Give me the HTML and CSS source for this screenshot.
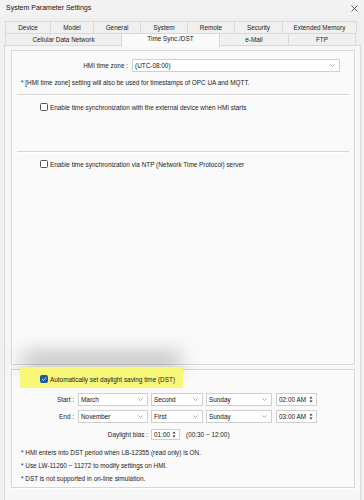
FILE: index.html
```html
<!DOCTYPE html>
<html>
<head>
    <title>System Parameter Settings</title>
    <link rel="stylesheet" href="styles.css">
</head>
<body>
    <div class="titlebar">
        <span class="title">System Parameter Settings</span>
        <svg class="close" width="7" height="7" viewBox="0 0 7 7"><path d="M0.5 0.5 L6.5 6.5 M6.5 0.5 L0.5 6.5" stroke="#333" stroke-width="0.8" fill="none"/></svg>
    </div>
    <div class="tabs">
        <div class="tabrow">
            <div class="tab w45">Device</div>
            <div class="tab w43">Model</div>
            <div class="tab w47">General</div>
            <div class="tab w47">System</div>
            <div class="tab w47">Remote</div>
            <div class="tab w48">Security</div>
            <div class="tab w75 last">Extended Memory</div>
        </div>
        <div class="tabrow">
            <div class="tab w116">Cellular Data Network</div>
            <div class="tab w99 active">Time Sync./DST</div>
            <div class="tab w69">e-Mail</div>
            <div class="tab w68 last">FTP</div>
        </div>
    </div>
    <div class="panel">
        <div class="group group-sync">
            <div class="row tz-row">
                <span class="label tz-label">HMI time zone :</span>
                <div class="select tz-select"><span>(UTC-08:00)</span><svg class="chev" width="5" height="3" viewBox="0 0 5 3"><path d="M0.3 0.3 L2.5 2.5 L4.7 0.3" stroke="#777" stroke-width="0.6" fill="none"/></svg></div>
            </div>
            <p class="note tz-note">* [HMI time zone] setting will also be used for timestamps of OPC UA and MQTT.</p>
            <div class="sep"></div>
            <label class="check"><span class="box"></span>Enable time synchronization with the external device when HMI starts</label>
            <div class="sep sep2"></div>
            <label class="check"><span class="box"></span>Enable time synchronization via NTP (Network Time Protocol) server</label>
        </div>
        <div class="group group-dst">
            <div class="highlight">
                <label class="check"><span class="box checked"><svg width="6" height="6" viewBox="0 0 6 6"><path d="M1 3.2 L2.4 4.5 L5 1.5" stroke="#fff" stroke-width="0.8" fill="none"/></svg></span>Automatically set daylight saving time (DST)</label>
            </div>
            <div class="row dst-row">
                <span class="label dst-label">Start :</span>
                <div class="select s-month"><span>March</span><svg class="chev" width="5" height="3" viewBox="0 0 5 3"><path d="M0.3 0.3 L2.5 2.5 L4.7 0.3" stroke="#777" stroke-width="0.6" fill="none"/></svg></div>
                <div class="select s-week"><span>Second</span><svg class="chev" width="5" height="3" viewBox="0 0 5 3"><path d="M0.3 0.3 L2.5 2.5 L4.7 0.3" stroke="#777" stroke-width="0.6" fill="none"/></svg></div>
                <div class="select s-day"><span>Sunday</span><svg class="chev" width="5" height="3" viewBox="0 0 5 3"><path d="M0.3 0.3 L2.5 2.5 L4.7 0.3" stroke="#777" stroke-width="0.6" fill="none"/></svg></div>
                <div class="spin s-time"><span>02:00 AM</span><svg class="arrows" width="4" height="7" viewBox="0 0 4 7"><path d="M2 0.5 L3.6 2.6 L0.4 2.6 Z M2 6.5 L3.6 4.4 L0.4 4.4 Z" fill="#333"/></svg></div>
            </div>
            <div class="row dst-row">
                <span class="label dst-label">End :</span>
                <div class="select s-month"><span>November</span><svg class="chev" width="5" height="3" viewBox="0 0 5 3"><path d="M0.3 0.3 L2.5 2.5 L4.7 0.3" stroke="#777" stroke-width="0.6" fill="none"/></svg></div>
                <div class="select s-week"><span>First</span><svg class="chev" width="5" height="3" viewBox="0 0 5 3"><path d="M0.3 0.3 L2.5 2.5 L4.7 0.3" stroke="#777" stroke-width="0.6" fill="none"/></svg></div>
                <div class="select s-day"><span>Sunday</span><svg class="chev" width="5" height="3" viewBox="0 0 5 3"><path d="M0.3 0.3 L2.5 2.5 L4.7 0.3" stroke="#777" stroke-width="0.6" fill="none"/></svg></div>
                <div class="spin s-time"><span>03:00 AM</span><svg class="arrows" width="4" height="7" viewBox="0 0 4 7"><path d="M2 0.5 L3.6 2.6 L0.4 2.6 Z M2 6.5 L3.6 4.4 L0.4 4.4 Z" fill="#333"/></svg></div>
            </div>
            <div class="row bias-row">
                <span class="label bias-label">Daylight bias :</span>
                <div class="spin s-bias"><span>01:00</span><svg class="arrows" width="4" height="7" viewBox="0 0 4 7"><path d="M2 0.5 L3.6 2.6 L0.4 2.6 Z M2 6.5 L3.6 4.4 L0.4 4.4 Z" fill="#333"/></svg></div>
                <span class="range">(00:30 ~ 12:00)</span>
            </div>
            <div class="notes">
                <p class="note">* HMI enters into DST period when LB-12355 (read only) is ON.</p>
                <p class="note">* Use LW-11260 ~ 11272 to modify settings on HMI.</p>
                <p class="note">* DST is not supported in on-line simulation.</p>
            </div>
        </div>
    </div>
</body>
</html>
```

FILE: styles.css
```css
* { margin: 0; padding: 0; box-sizing: border-box; font-family: "Liberation Sans", Arial, sans-serif; }
body { width: 364px; height: 500px; overflow: hidden; background: #f0f0f0; color: #1a1a1a; font-size: 6.4px; }

.titlebar { height: 15px; display: flex; align-items: center; justify-content: space-between; padding: 0 6px 0 6px; background: #f3f3f3; }
.title { font-size: 7px; color: #111; }
.close { margin-top: 1px; }

.tabs { margin: 6px 7px 0 5px; }
.tabrow { display: flex; height: 12px; }
.tab { height: 12px; line-height: 12px; text-align: center; background: #f0f0f0; border-top: 1px solid #d9d9d9; border-left: 1px solid #d9d9d9; color: #222; white-space: nowrap; }
.tab.last { border-right: 1px solid #d9d9d9; }
.tab.active { height: 14px; line-height: 10px; background: #fafafa; border-right: 1px solid #d9d9d9; margin-right: -1px; position: relative; z-index: 1; }
.w43 { width: 43px; } .w45 { width: 45px; } .w47 { width: 47px; } .w48 { width: 48px; } .w75 { width: 75px; }
.w116 { width: 116px; } .w99 { width: 99px; } .w69 { width: 69px; } .w68 { width: 68px; }

.panel { margin: 0 3px 0 4px; height: 460px; border: 1px solid #d9d9d9; border-bottom: none; background: #f7f7f7; padding: 4px 5px 0 6px; }
.group { border: 1px solid #d6d6d6; box-shadow: inset 1px 1px 0 #fff, 1px 1px 0 #fff; background: #fafafa; }
.group-sync { height: 315px; padding-top: 8px; }
.group-dst { height: 119px; margin-top: 4px; }

.row { display: flex; align-items: center; }
.label { text-align: right; white-space: nowrap; color: #1a1a1a; }
.tz-row { height: 13px; }
.tz-label { width: 116px; margin-right: 4px; }
.select { height: 13px; display: flex; align-items: center; justify-content: space-between; background: #fff; border: 1px solid #cfcfcf; padding: 0 4px 0 2px; color: #111; }
.tz-select { width: 208px; }

.note { white-space: nowrap; height: 13px; line-height: 13px; padding-left: 9px; color: #1a1a1a; }
.tz-note { margin-top: 4px; }

.sep { margin: 5px 5px 0 5px; height: 2px; border-top: 1px solid #d4d4d4; border-bottom: 1px solid #fff; }
.sep2 { margin-top: 39px; }

.check { display: flex; align-items: center; height: 10px; margin-top: 6px; padding-left: 28px; white-space: nowrap; color: #1a1a1a; }
.box { width: 8px; height: 8px; border: 1px solid #555; border-radius: 1.5px; background: #fff; margin-right: 2px; display: flex; align-items: center; justify-content: center; }
.box.checked { background: #1c5d99; border-color: #1c5d99; }

.highlight { width: 163px; height: 21px; margin: -3px 0 0 8px; background: #f7f77a; padding-top: 1px; box-shadow: 0 -16px 20px -2px rgba(0, 0, 0, 0.26); position: relative; }
.highlight .check { padding-left: 20px; }

.dst-row { height: 13px; margin-top: 4px; }
.highlight + .dst-row { margin-top: 5px; }
.dst-label { width: 62px; margin-right: 4px; }
.s-month { width: 70px; margin-right: 3px; }
.s-week { width: 52px; margin-right: 3px; }
.s-day { width: 66px; margin-right: 4px; }

.spin { height: 13px; display: flex; align-items: center; justify-content: space-between; background: #fff; border: 1px solid #cfcfcf; padding: 0 3px 0 2px; color: #111; }
.s-time { width: 41px; }
.s-bias { width: 29px; height: 11px; }
.bias-row { height: 11px; margin-top: 6px; }
.bias-label { width: 136px; margin-right: 3px; }
.range { margin-left: 6px; }

.notes { margin-top: 6px; }
```
